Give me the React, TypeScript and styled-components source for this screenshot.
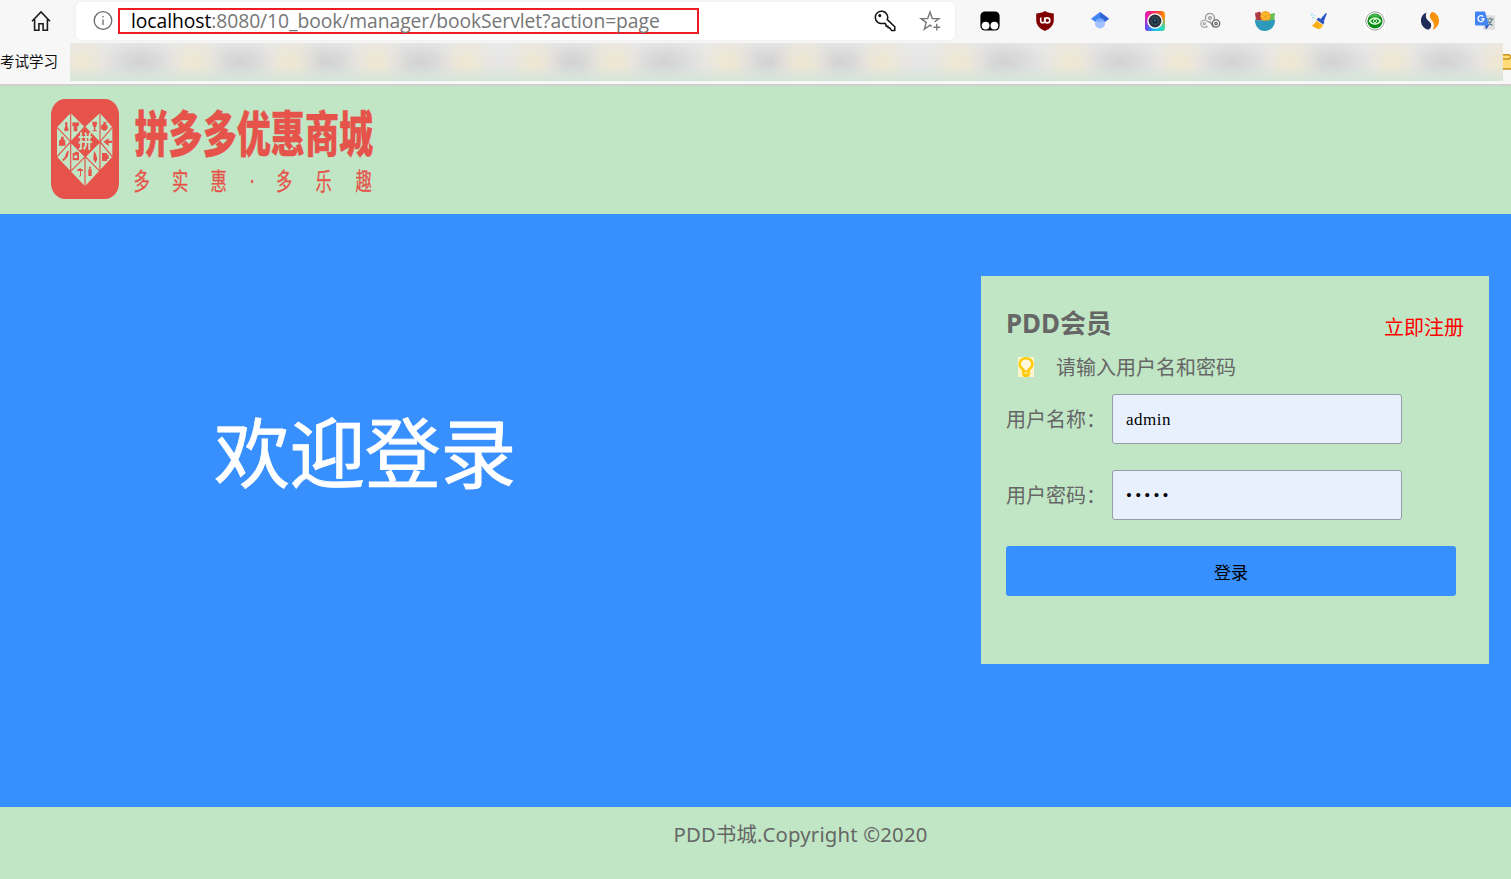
import React from 'react';
import styled, { createGlobalStyle } from 'styled-components';

const GREEN = '#c1e6c5';
const BLUE = '#3890ff';
const RED = '#e5534b';
const SANS = '"Noto Sans", "Noto Sans CJK SC", sans-serif';

const GlobalStyle = createGlobalStyle`
  * { box-sizing: border-box; }
  body { margin: 0; background: ${GREEN}; font-family: ${SANS}; overflow: hidden; }
`;

const Page = styled.div`
  width: 1511px;
  height: 879px;
  display: flex;
  flex-direction: column;
  overflow: hidden;
`;

const Toolbar = styled.div`
  height: 43px;
  flex: none;
  display: flex;
  align-items: flex-start;
  background: #f7f7f7;
  padding: 2px 0 0 30px;
`;

const HomeButton = styled.div`
  width: 46px;
  height: 38px;
  display: flex;
  align-items: center;
`;

const AddressBar = styled.div`
  width: 879px;
  height: 38px;
  display: flex;
  align-items: center;
  background: #fff;
  border-radius: 5px;
  box-shadow: 0 0 3px rgba(0, 0, 0, 0.07);
  padding: 0 14px 0 17px;
`;

const UrlBox = styled.div`
  width: 581px;
  height: 26px;
  margin: 0 auto 0 5px;
  border: 2px solid #ee1c25;
  padding-left: 11px;
  font-family: "Open Sans", "Noto Sans", sans-serif;
  font-size: 19.3px;
  line-height: 22px;
  letter-spacing: -0.06px;
  color: #767676;
  white-space: nowrap;
`;

const Host = styled.span`
  color: #000;
`;

const AddressActions = styled.div`
  display: flex;
  align-items: center;
  gap: 23px;
`;

const Extensions = styled.div`
  display: flex;
  align-items: center;
  gap: 33px;
  height: 38px;
  padding-left: 24px;
`;

const BookmarkBar = styled.div`
  height: 43px;
  flex: none;
  display: flex;
  align-items: flex-start;
  background: #f7f7f7;
  border-bottom: 2px solid #d0d0d0;
`;

const BookmarkLabel = styled.div`
  width: 70px;
  font-size: 14.5px;
  line-height: 37px;
  color: #111;
  white-space: nowrap;
`;

const Header = styled.header`
  height: 128px;
  flex: none;
  padding: 13px 0 0 51px;
  background: ${GREEN};
`;

const Main = styled.main`
  height: 593px;
  flex: none;
  display: flex;
  justify-content: space-between;
  align-items: flex-start;
  background: ${BLUE};
  padding: 62px 22px 0 214px;
`;

const Welcome = styled.h1`
  margin: 122px 0 0;
  font-size: 76px;
  line-height: 110px;
  font-weight: 400;
  letter-spacing: -0.6px;
  color: #fff;
  -webkit-text-stroke: 0.8px #fff;
`;

const Card = styled.section`
  width: 508px;
  height: 388px;
  background: ${GREEN};
  padding: 27px 25px 0;
  color: #666;
`;

const CardHead = styled.div`
  display: flex;
  justify-content: space-between;
  height: 44px;
`;

const CardTitle = styled.h2`
  margin: 0;
  font-size: 25.9px;
  line-height: 40px;
`;

const Register = styled.a`
  font-size: 20px;
  line-height: 50px;
  color: #f00;
`;

const Tip = styled.div`
  display: flex;
  align-items: center;
  height: 38px;
  padding-left: 12px;
  gap: 22px;
  font-size: 20px;
`;

const BulbSlot = styled.span`
  display: flex;
  padding-top: 2px;
`;

const Field = styled.label`
  display: flex;
  align-items: center;
  margin: 9px 0 26px;
  font-size: 20px;
  height: 50px;

  & + & {
    margin-top: 0;
  }
`;

const FieldName = styled.span`
  width: 106px;
  padding-bottom: 2px;
  white-space: nowrap;
`;

const Input = styled.input<{ $spacing: string }>`
  width: 290px;
  height: 50px;
  border: 1px solid #979da9;
  border-radius: 3px;
  background: #e8f0fe;
  padding: 1px 13px 0;
  font-family: "Liberation Serif", serif;
  font-size: 17px;
  letter-spacing: ${(p) => p.$spacing};
  color: #000;
  outline: none;
`;

const Submit = styled.button`
  display: block;
  width: 450px;
  height: 50px;
  border: 0;
  border-radius: 3px;
  background: ${BLUE};
  font-family: ${SANS};
  font-size: 17px;
  padding: 0;
  color: #000;
`;

const Fields = styled.form`
  margin: 0;
`;

const Footer = styled.footer`
  flex: 1;
  background: ${GREEN};
  padding: 12px 0 0 90px;
  text-align: center;
  font-size: 20.3px;
  letter-spacing: 0.19px;
  line-height: 30px;
  color: #666;
`;

const HomeIcon = () => (
  <svg width="22" height="22" viewBox="0 0 22 22" fill="none" stroke="#1d1d1d" strokeWidth="1.6">
    <path d="M2 11.2 11 2l9 9.2M4.6 9.2v11h4.3v-6.4h4.2v6.4h4.3v-11" />
  </svg>
);

const InfoIcon = () => (
  <svg width="20" height="20" viewBox="0 0 20 20" fill="none" stroke="#6a6a6a" strokeWidth="1.3">
    <circle cx="10" cy="9.500" r="8.800" />
    <path d="M10 8.500v5.500M10 5v1.600" />
  </svg>
);

const KeyIcon = () => (
  <svg width="22" height="22" viewBox="0 0 22 22" fill="none" stroke="#111" strokeWidth="1.5" strokeLinejoin="round">
    <path d="M13.3 9.6A6.2 6.2 0 1 0 9 13.4l1.7-.2 1.3 1.2v1.8h2v1.6h1.6l1.9 2.6h3.3v-3.6z" />
    <circle cx="5.8" cy="5.6" r="0.8" fill="#111" />
  </svg>
);

const StarIcon = () => (
  <svg width="22" height="22" viewBox="0 0 22 22" fill="none" stroke="#777" strokeWidth="1.4">
    <path d="M15.500 12 20 8.600h-6.700L11 2 8.700 8.600H2L7.300 12.600 5.300 19.300l5.700-4.200 1.800 1.300" />
    <path d="M17.800 13.800v6.800M14.400 17.200h6.800" />
  </svg>
);

const Icon = ({ children }: { children: React.ReactNode }) => (
  <svg width="22" height="22" viewBox="-1 -1 22 22">{children}</svg>
);

const ExtensionIcons = () => (
  <Extensions>
    <Icon>
      <rect x="0.4" y="0.4" width="19.2" height="19.2" rx="4.5" fill="#000" />
      <circle cx="5.6" cy="14.6" r="3.9" fill="#fff" />
      <circle cx="14.4" cy="14.6" r="3.9" fill="#fff" />
    </Icon>
    <Icon>
      <path d="M10 0C7 1.8 4 2.4 1.2 2.4V9c0 5.500 3.800 8.800 8.800 11 5-2.200 8.800-5.500 8.800-11V2.400C16 2.400 13 1.800 10 0z" fill="#800000" />
      <path d="M5.700 6.400v3.400a2 2 0 0 0 4 0V6.400" fill="none" stroke="#fff" strokeWidth="1.600" />
      <circle cx="12.300" cy="9.400" r="2.500" fill="none" stroke="#fff" strokeWidth="1.600" />
    </Icon>
    <Icon>
      <path d="M10 1 1 7.800l5 3.700h8l5-3.700z" fill="#4285f4" />
      <path d="m10 1 9 6.800-5 3.700-4-4z" fill="#3367d6" />
      <circle cx="10" cy="12.500" r="5" fill="#a0c3ff" />
      <path d="M5.400 10.500a5 5 0 0 1 9.200 0z" fill="#76a7fa" />
    </Icon>
    <Icon>
      <defs>
        <linearGradient id="cameraTop" x1="0" y1="0" x2="1" y2="0">
          <stop offset="0" stopColor="#e01fc0" />
          <stop offset="0.5" stopColor="#fb2a4c" />
          <stop offset="1" stopColor="#ff9a00" />
        </linearGradient>
        <linearGradient id="cameraBottom" x1="0" y1="0" x2="1" y2="0">
          <stop offset="0" stopColor="#6a3cf5" />
          <stop offset="0.45" stopColor="#16b8f5" />
          <stop offset="1" stopColor="#2fe6b0" />
        </linearGradient>
        <linearGradient id="cameraFade" x1="0" y1="0" x2="0" y2="1">
          <stop offset="0.3" stopColor="#000" />
          <stop offset="0.85" stopColor="#fff" />
        </linearGradient>
        <mask id="cameraMask"><rect width="20" height="20" fill="url(#cameraFade)" /></mask>
      </defs>
      <rect width="20" height="20" rx="3.500" fill="url(#cameraTop)" />
      <rect width="20" height="20" rx="3.500" fill="url(#cameraBottom)" mask="url(#cameraMask)" />
      <circle cx="10" cy="10" r="7.800" fill="#fff" />
      <circle cx="10" cy="10" r="6.400" fill="#2c3540" />
      <circle cx="10" cy="10" r="3.400" fill="#172b3a" stroke="#45596b" strokeWidth="0.800" />
      <circle cx="9.800" cy="9.600" r="1" fill="#397da4" />
    </Icon>
    <Icon>
      <g fill="none" strokeWidth="1.300">
        <path d="M5.800 8.500A4.500 4.500 0 1 1 14 8.800" stroke="#999" />
        <circle cx="10" cy="7" r="1.400" stroke="#999" />
        <path d="M7.500 15A3.700 3.700 0 1 1 7.500 10.500L9.500 11" stroke="#aaa" />
        <circle cx="4.300" cy="12.700" r="1" stroke="#aaa" />
        <path d="M9 10.500c3 .5 2.500 5 5 5.500" stroke="#888" />
        <circle cx="16" cy="12.500" r="3.700" stroke="#666" />
        <circle cx="16" cy="12.500" r="1.200" stroke="#666" />
      </g>
    </Icon>
    <Icon>
      <path d="M0 2 5 .5l4 9H1z" fill="#b83b45" />
      <path d="m15 3 5-1-1 8h-6z" fill="#66bd55" />
      <circle cx="10.500" cy="5.200" r="5.200" fill="#f3a21b" />
      <circle cx="10.500" cy="5.200" r="3.800" fill="#ffc23d" />
      <path d="M10.500 1.500v7.500M7 4l7 3M14 3.500 7 7" stroke="#f39b16" strokeWidth="0.800" />
      <path d="M2 5h1M4 3h1M4 7h1" stroke="#4d2631" />
      <path d="M0 8.500c3 1.500 17 1.500 20 0 .300 6-3.500 11.500-10 11.500S-.300 14.500 0 8.500z" fill="#2e9abb" />
    </Icon>
    <Icon>
      <path d="m15.800 2-5.500 6.200 3.300 3L16.800 2.500z" fill="#2857c9" />
      <path d="m8.500 6.500 6 4.500-1.300 2.500-6.700-4.700z" fill="#3155bb" />
      <path d="m6.200 9.500 6.800 4.500c-.900 2.500-2.500 4-5 4.200L1.500 14.500c2.300-.800 3.900-2.200 4.700-5z" fill="#ffb51c" />
      <path d="m3.500 14.500 3-2m-1 4 3-2.500" stroke="#e98913" />
      <path d="M.8 2.500h2v2h-2zM4 4h1.500v1.500H4zM2 6h2v1.500H2z" fill="#9ee4f2" />
    </Icon>
    <Icon>
      <rect width="20" height="20" fill="#fff" />
      <circle cx="10" cy="10" r="9.200" fill="#fff" stroke="#9b9b9b" />
      <circle cx="10" cy="10" r="7.600" fill="#0b8c18" />
      <path d="M4 6.500a7 7 0 0 1 12 0c-4-1.500-8-1.500-12 0z" fill="#49b84c" />
      <path d="M4.500 10c3-4 8-4 11 0-3 4-8 4-11 0z" fill="none" stroke="#d9ffd8" strokeWidth="1.300" />
      <circle cx="10" cy="10" r="1.600" fill="none" stroke="#d9ffd8" />
    </Icon>
    <Icon>
      <path d="M6.500 1.500C2.500 3 .8 6.500 1 10.200c.3 5 4.300 8.300 7.800 8.300 3-1.700 3-5.500.8-7.500C6.500 8.300 4.800 6 6.500 1.500z" fill="#1f2b59" />
      <path d="M12 1c4.500.500 7 4.500 7 9 0 4-2.800 7.500-6.500 8.800 2.500-4 1.500-6.800-1-9.800C9 6 9.500 2.500 12 1z" fill="#f7930f" />
    </Icon>
    <Icon>
      <rect x="8" y="4.200" width="12" height="14.500" rx="1" fill="#dedede" />
      <path d="M11.500 8h7M15 6.500V8m2.300 0c-.8 3-2.500 5-4.800 6.500m.5-5c1 2.500 2.500 4 4.700 5" stroke="#607d8b" fill="none" strokeWidth="1.100" />
      <path d="M1 .5h9l4 14H1.500Q0 14.500 0 13V1.500Q0 .5 1 .5z" fill="#4285f4" />
      <path d="M10 14.500h4l-3 4z" fill="#274fc4" />
      <path d="M8.300 5.700A3 3 0 1 0 9 8H6.300" stroke="#fff" strokeWidth="1.300" fill="none" />
    </Icon>
  </Extensions>
);

const FOLDERS = [13, 124, 220, 306, 397, 463, 544, 657, 733, 813, 888, 1000, 1110, 1220, 1323, 1430];
const TITLES = [70, 170, 256, 350, 502, 595, 699, 770, 935, 1050, 1162, 1262, 1375];

const BlurredBookmarks = () => (
  <svg width="1433" height="38" viewBox="0 0 1433 38">
    <defs>
      <linearGradient id="strip" x1="0" y1="0" x2="0" y2="1">
        <stop offset="0" stopColor="#e9e9e8" />
        <stop offset="0.55" stopColor="#e6e6e6" />
        <stop offset="1" stopColor="#e0e5e0" />
      </linearGradient>
      <linearGradient id="lowerTint" x1="0" y1="0" x2="0" y2="1">
        <stop offset="0.6" stopColor="#d5e5d8" stopOpacity="0" />
        <stop offset="1" stopColor="#d5e5d8" stopOpacity="0.85" />
      </linearGradient>
      <radialGradient id="folderTint">
        <stop offset="0" stopColor="#efe7d0" />
        <stop offset="0.4" stopColor="#eee7d4" stopOpacity="0.7" />
        <stop offset="1" stopColor="#ebe7dd" stopOpacity="0" />
      </radialGradient>
      <radialGradient id="titleTint">
        <stop offset="0" stopColor="#d2d2d2" />
        <stop offset="0.4" stopColor="#d6d6d6" stopOpacity="0.7" />
        <stop offset="1" stopColor="#dfdfdf" stopOpacity="0" />
      </radialGradient>
    </defs>
    <rect width="1433" height="38" fill="url(#strip)" />
    {TITLES.map((x) => <ellipse key={x} cx={x} cy="19" rx="48" ry="28" fill="url(#titleTint)" />)}
    {FOLDERS.map((x) => <ellipse key={x} cx={x} cy="20" rx="31" ry="32" fill="url(#folderTint)" />)}
    <rect width="1433" height="38" fill="url(#lowerTint)" />
  </svg>
);

const FolderIcon = () => (
  <svg width="8" height="38" viewBox="0 0 8 38">
    <path d="M0 11.500h6q2 0 2 3V26H0z" fill="#ffdc78" />
    <path d="M0 11.800h6l2 2M0 16h6l2-2M0 26h8" fill="none" stroke="#c8921b" strokeWidth="1.400" />
  </svg>
);

const Logo = () => (
  <svg width="330" height="102" viewBox="0 0 330 102" fill={RED}>
    <svg width="68" height="100" viewBox="33 27 204 300" preserveAspectRatio="none">
      <rect x="33" y="27" width="204" height="300" rx="42" ry="48" />
      <path d="M92 69 134 112 180 69 217 112V200L135 289 51 200V112z" fill={GREEN} />
      <path d="M134 108 180 155 136 202 91 155z" />
      <path
        d="M92 69V244M180 69V244M135 200V289M51 112 92 155 51 200M91 155 180 244M180 155 92 244M217 112 180 155 217 200"
        fill="none" stroke={RED} strokeWidth="3.500"
      />
      <path d="M75 97h7v11l4 12q-7 8-14 0l4-12zM97 98l6-2q4 4 8 0l7 3-2 10-4-1v16h-11v-16l-4 1zM157 95h14q0 14-5 17v9h4v3h-12v-3h4v-9q-5-3-5-17z" />
      <circle cx="193" cy="112" r="10" />
      <path d="M190 94l6 3 5-2-5 9h-5zM57 153q10-14 19 0v14H57zM63 140h8v8h-8zM190 155l16-10v7h10v7h-10v9zM87 183l-4 17-12 13-5-3 8-8 7-18zM98 189h5l3-4h8l3 4v22H98zM186 189h15v5h5v13h-5v6h-15zM163 183l5 9 4 16-6 11-6-11 1-16zM110 243q10-16 21 0zM120 242h3v15q-5 6-7 0h4zM145 238h10v20h-10zM147 230h6v6h-6z" />
      <circle cx="107" cy="200" r="5" fill={GREEN} />
      <text
        transform="translate(136 175) scale(1 1.250)"
        textAnchor="middle" fontFamily={SANS} fontWeight="700" fontSize="43" fill={GREEN}
      >
        拼
      </text>
    </svg>
    <text
      transform="translate(83.500 53.300) scale(1 1.430)"
      fontFamily={SANS} fontWeight="900" fontSize="34.100" stroke={RED} strokeWidth="0.300"
    >
      拼多多优惠商城
    </text>
    <text
      transform="translate(0 90.500) scale(1 1.450)"
      x="82.500 121 159.500 199 225 264.500 304.500"
      fontFamily={SANS} fontSize="16.300" stroke={RED} strokeWidth="0.200"
    >
      多实惠·多乐趣
    </text>
  </svg>
);

const BulbIcon = () => (
  <svg width="16" height="20" viewBox="0 0 16 20">
    <rect width="16" height="20" fill="#fff3c9" />
    <path d="M5.300 14.500v-2C3 11 1.600 9.500 1.600 7.200a6.400 6 0 0 1 12.800 0c0 2.300-1.400 3.800-3.700 5.300v2z" fill="#fff8de" stroke="#ffcb0a" strokeWidth="2.500" />
    <path d="M4.300 14h7.400v4.500L10 20H6l-1.700-1.500z" fill="#ffcb0a" />
    <path d="M6.500 16h3" stroke="#fff3c9" strokeWidth="1.200" />
  </svg>
);

export default function App() {
  return (
    <Page lang="zh-CN">
      <GlobalStyle />
      <Toolbar>
        <HomeButton><HomeIcon /></HomeButton>
        <AddressBar>
          <InfoIcon />
          <UrlBox><Host>localhost</Host>:8080/10_book/manager/bookServlet?action=page</UrlBox>
          <AddressActions><KeyIcon /><StarIcon /></AddressActions>
        </AddressBar>
        <ExtensionIcons />
      </Toolbar>
      <BookmarkBar>
        <BookmarkLabel>考试学习</BookmarkLabel>
        <BlurredBookmarks />
        <FolderIcon />
      </BookmarkBar>
      <Header><Logo /></Header>
      <Main>
        <Welcome>欢迎登录</Welcome>
        <Card>
          <CardHead>
            <CardTitle>PDD会员</CardTitle>
            <Register>立即注册</Register>
          </CardHead>
          <Tip><BulbSlot><BulbIcon /></BulbSlot>请输入用户名和密码</Tip>
          <Fields>
            <Field>
              <FieldName>用户名称：</FieldName>
              <Input $spacing="0.5px" type="text" defaultValue="admin" />
            </Field>
            <Field>
              <FieldName>用户密码：</FieldName>
              <Input $spacing="3.2px" type="password" defaultValue="admin" />
            </Field>
            <Submit type="button">登录</Submit>
          </Fields>
        </Card>
      </Main>
      <Footer>PDD书城.Copyright ©2020</Footer>
    </Page>
  );
}
